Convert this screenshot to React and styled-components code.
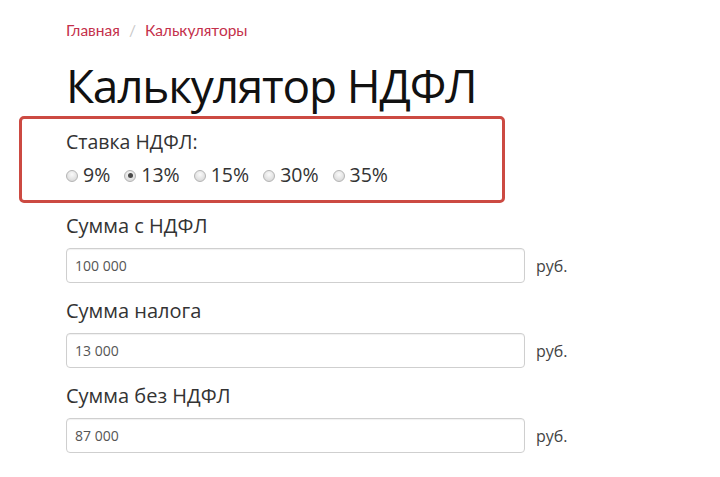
import React from "react";
import styled, { createGlobalStyle } from "styled-components";

const Global = createGlobalStyle`
  html, body { margin: 0; padding: 0; background: #fff; }
  body { font-family: "Open Sans", "Noto Sans", sans-serif; color: #222; }
`;

const Page = styled.div`
  padding: 20px 0 0 66px;
`;

const Breadcrumbs = styled.nav`
  display: flex;
  align-items: center;
  gap: 9px;
  font-family: Lato, "Open Sans", sans-serif;
  font-size: 15.5px;
  line-height: 20px;
`;

const Crumb = styled.a`
  color: #c4304b;
  text-decoration: none;
`;

const Sep = styled.span`
  color: #c8c8c8;
`;

const Title = styled.h1`
  margin: 19px 0 5px;
  font-family: "Open Sans", sans-serif;
  font-weight: 400;
  font-size: 46px;
  line-height: 52px;
  color: #111;
  letter-spacing: -1.2px;
`;

const RateBox = styled.fieldset`
  margin: 0 0 0 -47px;
  border: 3px solid #cc4a42;
  border-radius: 5px;
  padding: 10px 0 12px 44px;
  box-sizing: border-box;
  width: 486px;
`;

const RateLegend = styled.div`
  font-size: 19.5px;
  line-height: 26px;
  color: #333;
`;

const RadioRow = styled.div`
  display: flex;
  align-items: center;
  gap: 14px;
  margin-top: 7px;
`;

const RadioLabel = styled.label`
  display: flex;
  align-items: center;
  gap: 5px;
  font-size: 19.5px;
  line-height: 26px;
  color: #333;
`;

const RadioDot = styled.span`
  width: 12px;
  height: 12px;
  border-radius: 50%;
  border: 1px solid #b4b4b4;
  background: radial-gradient(circle at 50% 35%, #fafafa 0%, #e2e2e2 60%, #d0d0d0 100%);
  box-sizing: border-box;
  display: flex;
  align-items: center;
  justify-content: center;
  margin-top: 1px;
  &::after {
    content: "";
    width: 5px;
    height: 5px;
    border-radius: 50%;
    background: ${(p) => (p.$checked ? "#4a4a4a" : "transparent")};
  }
`;

const Field = styled.div`
  margin-top: ${(p) => (p.$first ? "10px" : "15px")};
`;

const FieldLabel = styled.div`
  font-size: 20px;
  line-height: 26px;
  color: #333;
  margin-bottom: 9px;
`;

const InputRow = styled.div`
  display: flex;
  align-items: center;
  gap: 11px;
`;

const Input = styled.input`
  flex: none;
  width: 459px;
  height: 35px;
  box-sizing: border-box;
  border: 1px solid #cfcfcf;
  border-radius: 4px;
  box-shadow: inset 0 1px 1px rgba(0,0,0,0.06);
  padding: 0 8px;
  font-family: "Open Sans", sans-serif;
  font-size: 14px;
  color: #555;
  outline: none;
`;

const Unit = styled.span`
  font-size: 16px;
  color: #444;
`;

const rates = ["9%", "13%", "15%", "30%", "35%"];
const fields = [
  ["Сумма с НДФЛ", "100 000"],
  ["Сумма налога", "13 000"],
  ["Сумма без НДФЛ", "87 000"],
];

export default function App() {
  return (
    <>
      <Global />
      <Page>
        <Breadcrumbs>
          <Crumb href="#">Главная</Crumb>
          <Sep>/</Sep>
          <Crumb href="#">Калькуляторы</Crumb>
        </Breadcrumbs>
        <Title>Калькулятор НДФЛ</Title>
        <RateBox>
          <RateLegend>Ставка НДФЛ:</RateLegend>
          <RadioRow>
            {rates.map((r) => (
              <RadioLabel key={r}>
                <RadioDot $checked={r === "13%"} />
                {r}
              </RadioLabel>
            ))}
          </RadioRow>
        </RateBox>
        {fields.map(([label, value], i) => (
          <Field key={label} $first={i === 0}>
            <FieldLabel>{label}</FieldLabel>
            <InputRow>
              <Input defaultValue={value} />
              <Unit>руб.</Unit>
            </InputRow>
          </Field>
        ))}
      </Page>
    </>
  );
}
